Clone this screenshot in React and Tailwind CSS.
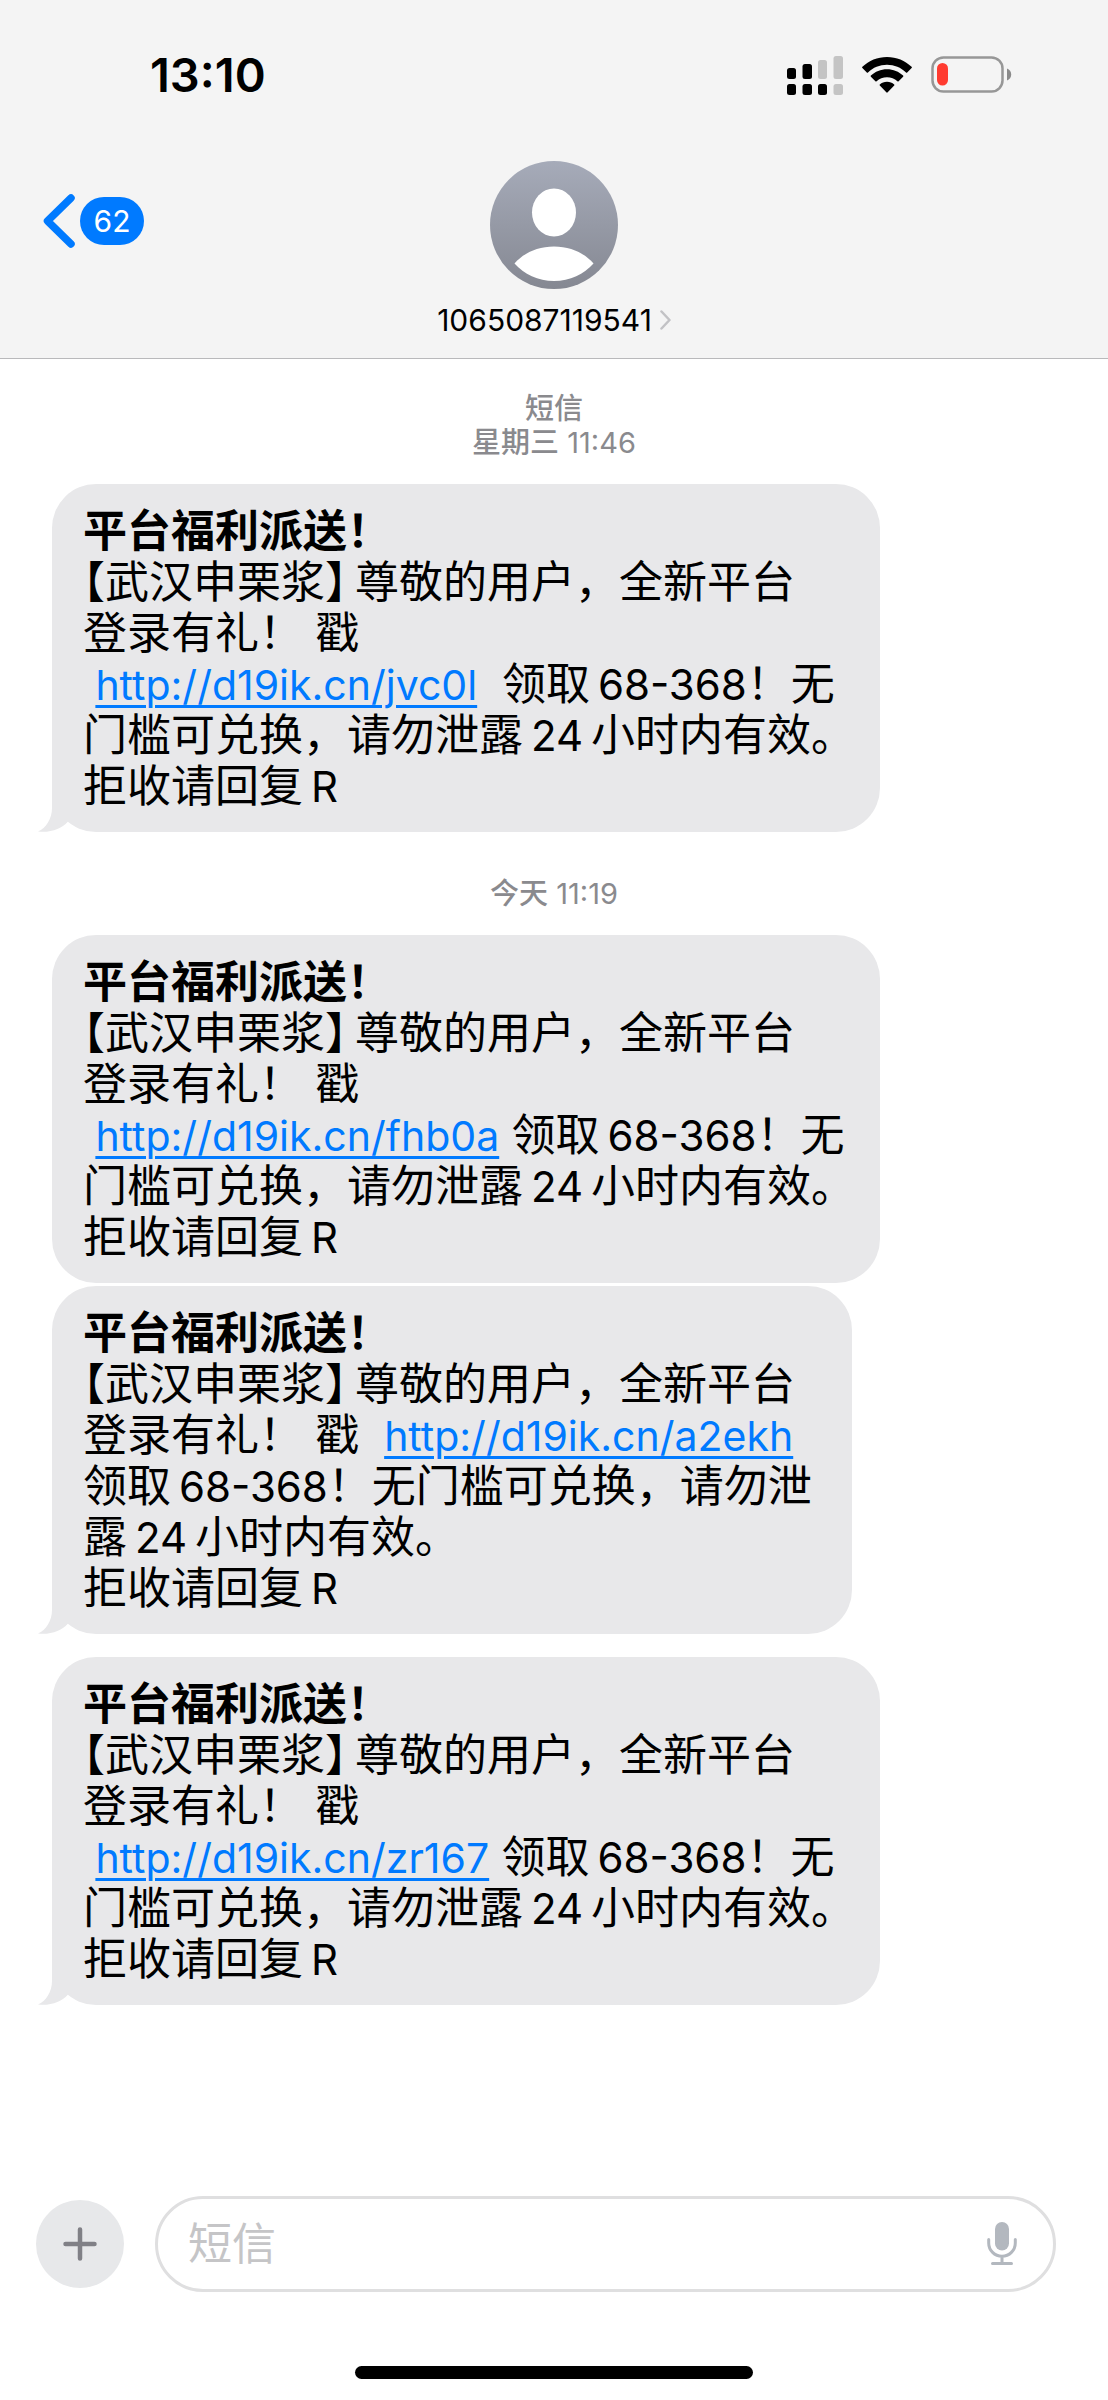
function SignalIcon() {
  return (
    <svg width="56" height="39" viewBox="0 0 56 39" aria-hidden="true">
      <rect x="0" y="12" width="9" height="11" rx="2.5" fill="#000" />
      <rect x="15.500" y="8" width="9.500" height="15" rx="2.500" fill="#000" />
      <rect x="31" y="4" width="9" height="19" rx="2.500" fill="#c4c4c4" />
      <rect x="46.500" y="0" width="9.500" height="23" rx="2.500" fill="#c4c4c4" />
      <rect x="0" y="28" width="9" height="11" rx="2.500" fill="#000" />
      <rect x="15.500" y="28" width="9.500" height="11" rx="2.500" fill="#000" />
      <rect x="31" y="28" width="9" height="11" rx="2.500" fill="#000" />
      <rect x="46.500" y="28" width="9.500" height="11" rx="2.500" fill="#c4c4c4" />
    </svg>
  );
}

function WifiIcon() {
  return (
    <svg width="50" height="36" viewBox="0 0 50 36" aria-hidden="true">
      <path d="M25 0C34.500 0 43.200 3.700 49.600 9.800q.6.600 0 1.200l-4.400 4.400q-.6.500-1.200 0C39 10.600 32.300 7.800 25 7.800S11 10.600 6 15.400q-.6.500-1.200 0L.4 11q-.6-.6 0-1.200C6.800 3.700 15.500 0 25 0z" />
      <path d="M25 12.200c6.200 0 11.900 2.400 16.100 6.400q.6.600 0 1.200l-4.500 4.500q-.6.500-1.200 0C32.600 21.700 29 20.200 25 20.200s-7.600 1.500-10.400 4.100q-.6.500-1.200 0l-4.500-4.500q-.6-.6 0-1.200c4.200-4 9.900-6.400 16.100-6.400z" />
      <path d="M25 24.700c2.800 0 5.300 1 7.200 2.700q.6.600 0 1.200l-6.500 6.700q-.7.700-1.400 0l-6.500-6.700q-.6-.6 0-1.200c1.900-1.700 4.400-2.700 7.200-2.700z" />
    </svg>
  );
}

function BatteryIcon() {
  return (
    <svg width="81" height="38" viewBox="0 0 81 38" aria-hidden="true">
      <rect x="1.500" y="1.500" width="70" height="34" rx="11" fill="none" stroke="#979797" strokeWidth="2.500" />
      <path d="M76 12.500c2.600.8 4.200 3.200 4.200 6s-1.600 5.200-4.200 6z" fill="#8a8a8a" />
      <rect x="6" y="7" width="11" height="22.500" rx="5.500" fill="#ff3b30" />
    </svg>
  );
}

function StatusBar() {
  return (
    <div className="flex items-center justify-between pt-[42px] pr-[96px] pl-[150px]">
      <time className="text-[47px] leading-[66px] font-semibold">13:10</time>
      <div className="flex items-center">
        <SignalIcon />
        <div className="ml-[19px]">
          <WifiIcon />
        </div>
        <div className="ml-[19px]">
          <BatteryIcon />
        </div>
      </div>
    </div>
  );
}

function Avatar() {
  return (
    <svg width="128" height="128" viewBox="0 0 128 128" aria-hidden="true">
      <defs>
        <linearGradient id="avatar-fill" x1="0" y1="0" x2="0" y2="1">
          <stop offset="0" stopColor="#a6abb9" />
          <stop offset="1" stopColor="#858892" />
        </linearGradient>
      </defs>
      <circle cx="64" cy="64" r="64" fill="url(#avatar-fill)" />
      <ellipse cx="64" cy="51.500" rx="22" ry="24" fill="#fff" />
      <path d="M24.500 102.500C33 92.500 47 85.500 64 85.500s31 7 39.500 17c-9.500 10.800-23.500 17.500-39.500 17.500s-30-6.700-39.500-17.500z" fill="#fff" />
    </svg>
  );
}

function Header() {
  return (
    <header className="border-b border-[#b9b9bb] bg-[#f4f4f4]">
      <StatusBar />
      <div className="grid grid-cols-[1fr_auto_1fr] items-start pt-[53px] pb-[20px]">
        <button type="button" aria-label="返回，62 条未读" className="mt-[33px] ml-[43px] flex items-center gap-[5px] justify-self-start">
          <svg width="32" height="54" viewBox="0 0 32 54" fill="none" stroke="#007aff" strokeWidth="7.500" strokeLinecap="round" strokeLinejoin="round" aria-hidden="true">
            <path d="M28 4 4.500 27 28 50" />
          </svg>
          <span className="flex h-[48px] w-[64px] items-center justify-center rounded-full bg-[#007aff] text-[30px] text-white">62</span>
        </button>
        <button type="button" className="flex flex-col items-center">
          <Avatar />
          <span className="mt-[13px] flex items-center gap-[8px]">
            <span className="text-[30px] leading-[36px]">1065087119541</span>
            <svg width="11" height="20" viewBox="0 0 11 20" fill="none" stroke="#c2c2c5" strokeWidth="2.500" strokeLinecap="round" strokeLinejoin="round" aria-hidden="true">
              <path d="M1.500 1.500 9.500 10l-8 8.500" />
            </svg>
          </span>
        </button>
      </div>
    </header>
  );
}

function ShortLink({ path }) {
  return (
    <a
      href={`http://d19ik.cn/${path}`}
      className="text-[41px] leading-none text-[#007aff] underline decoration-[3px] underline-offset-[5px]"
    >
      {`http://d19ik.cn/${path}`}
    </a>
  );
}

function Amount() {
  return <span className="ml-[8px] text-[42px] leading-none">68-368</span>;
}

function Validity() {
  return (
    <>
      露<span className="mx-[8px] text-[42px] leading-none">24</span>小时内有效。
    </>
  );
}

function Bubble({ narrow, tail, children }) {
  return (
    <article
      className={`relative rounded-[44px] bg-[#e8e8ea] pt-[22px] pb-[20px] pl-[31px] text-[44px] leading-[51px] whitespace-pre ${
        narrow ? 'w-[800px]' : 'w-[828px]'
      }`}
    >
      <h2 className="font-bold">平台福利派送！</h2>
      <p>
        <span className='[font-feature-settings:"halt"]'>【</span>武汉申栗浆
        <span className='mr-[8px] [font-feature-settings:"halt"]'>】</span>
        尊敬的用户，全新平台
      </p>
      {children}
      <p>
        拒收请回复<span className="ml-[8px] text-[42px] leading-none">R</span>
      </p>
      {tail && (
        <svg className="absolute bottom-0 -left-[14px]" width="46" height="44" viewBox="0 0 46 44" aria-hidden="true">
          <path d="M14 0V20C14 31 8 40 0 43.500C12 45 24 41 30 33.500L46 20V0z" fill="#e8e8ea" />
        </svg>
      )}
    </article>
  );
}

function WideBody({ path, gap }) {
  return (
    <>
      <p>登录有礼！ 戳</p>
      <p>
        {' '}
        <ShortLink path={path} />
        {gap}领取<Amount />！无
      </p>
      <p>
        门槛可兑换，请勿泄
        <Validity />
      </p>
    </>
  );
}

function NarrowBody({ path }) {
  return (
    <>
      <p>
        登录有礼！ 戳{'  '}
        <ShortLink path={path} />
      </p>
      <p>
        领取<Amount />！无门槛可兑换，请勿泄
      </p>
      <p>
        <Validity />
      </p>
    </>
  );
}

function Stamp({ children }) {
  return <div className="text-center text-[29px] leading-[34px] text-[#8a8a8e]">{children}</div>;
}

function Composer() {
  return (
    <form className="flex items-center gap-[31px] pr-[52px] pl-[36px]" onSubmit={(e) => e.preventDefault()}>
      <button type="button" aria-label="添加" className="flex size-[88px] shrink-0 items-center justify-center rounded-full bg-[#e7e8ea]">
        <svg width="34" height="34" viewBox="0 0 34 34" stroke="#808086" strokeWidth="4.500" strokeLinecap="round" aria-hidden="true">
          <path d="M17 2.500v29M2.500 17h29" />
        </svg>
      </button>
      <div className="flex h-[96px] min-w-0 flex-1 items-center rounded-full border-[3px] border-[#dfdfe0] pr-[36px] pl-[30px]">
        <input
          type="text"
          aria-label="短信"
          placeholder="短信"
          className="min-w-0 flex-1 bg-transparent text-[44px] leading-[52px] outline-none placeholder:text-[#c5c5c7]"
        />
        <button type="button" aria-label="听写">
          <svg width="30" height="44" viewBox="0 0 30 44" fill="none" stroke="#b3b8bf" strokeWidth="3" strokeLinecap="round" aria-hidden="true">
            <rect x="8" y="0" width="14" height="28.500" rx="7" fill="#b3b8bf" stroke="none" />
            <path d="M1.700 17.500V21a13.300 13.300 0 0 0 26.600 0v-3.500M15 34.500v7M5.500 41.500h19" />
          </svg>
        </button>
      </div>
    </form>
  );
}

export default function App() {
  return (
    <div className='flex min-h-screen flex-col bg-white font-["Inter","Noto_Sans_CJK_SC",sans-serif] text-black' lang="zh-CN">
      <Header />
      <main className="flex flex-1 flex-col pt-[33px]">
        <Stamp>
          <div className="font-medium">短信</div>
          <div>
            <span className="font-medium">星期三</span> 11:46
          </div>
        </Stamp>
        <div className="mt-[24px] pl-[52px]">
          <Bubble tail>
            <WideBody path="jvc0l" gap="  " />
          </Bubble>
        </div>
        <div className="mt-[45px]">
          <Stamp>
            <span className="font-medium">今天</span> 11:19
          </Stamp>
        </div>
        <div className="mt-[24px] flex flex-col gap-[3px] pl-[52px]">
          <Bubble>
            <WideBody path="fhb0a" gap=" " />
          </Bubble>
          <Bubble narrow tail>
            <NarrowBody path="a2ekh" />
          </Bubble>
        </div>
        <div className="mt-[23px] pl-[52px]">
          <Bubble tail>
            <WideBody path="zr167" gap=" " />
          </Bubble>
        </div>
      </main>
      <footer className="flex flex-col pb-[21px]">
        <Composer />
        <div className="mt-[74px] h-[13px] w-[398px] self-center rounded-full bg-black" />
      </footer>
    </div>
  );
}
